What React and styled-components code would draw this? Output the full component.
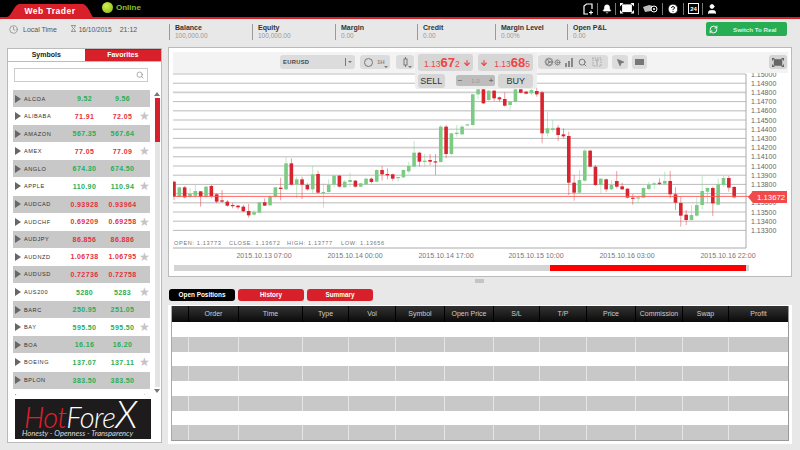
import React from 'react';
import styled, { createGlobalStyle } from 'styled-components';
import { RefreshCw, Cog, Search, Bell, HelpCircle, User, Hourglass, Clock, MousePointer2, ArrowDown as DownIcon } from 'lucide-react';

const GlobalStyle = createGlobalStyle`
  html, body { margin: 0; padding: 0; background: #e8e8e8; overflow: hidden; }
  body { font-family: "Liberation Sans", Arial, sans-serif; }
  * { box-sizing: border-box; }
`;

const Page = styled.div`
  width: 800px;
  height: 450px;
  overflow: hidden;
  background: #e8e8e8;
  display: flex;
  flex-direction: column;
`;

/* ---------- top black bar ---------- */
const TopBar = styled.div`
  height: 19px;
  flex: none;
  background: #000;
  border-bottom: 2px solid #d61f26;
  display: flex;
  align-items: flex-end;
  padding: 0 80px 0 7px;
`;
const BrandTab = styled.div`
  width: 86px;
  height: 13px;
  background: #d8202a;
  color: #fff;
  font-size: 8.5px;
  font-weight: bold;
  letter-spacing: 0.5px;
  line-height: 14px;
  text-align: center;
  clip-path: path('M0 13 C5 12 6 2 12 0 L76 0 C82 2 84 12 86 13 Z');
`;
const OnlineWrap = styled.div`
  display: flex;
  align-items: center;
  gap: 3px;
  margin: 0 0 3px 9px;
  height: 14px;
  color: #8cc320;
  font-size: 8px;
  font-weight: bold;
`;
const OnlineDot = styled.span`
  width: 11px;
  height: 11px;
  border-radius: 50%;
  background: radial-gradient(circle at 40% 35%, #d6f04a, #7fb512);
`;
const TopIcons = styled.div`
  margin-left: auto;
  height: 17px;
  display: flex;
  align-items: center;
  color: #fff;
`;
const TopIcon = styled.span`
  width: ${(p) => p.$w || 20}px;
  height: 12px;
  display: flex;
  align-items: center;
  justify-content: center;
  border-left: ${(p) => (p.$first ? 'none' : '1px solid #777')};
`;

/* ---------- info strip ---------- */
const InfoBar = styled.div`
  height: 28px;
  flex: none;
  display: flex;
  align-items: center;
  padding: 0 13px 3px 9px;
  color: #555;
`;
const LocalTime = styled.div`
  width: 160px;
  margin-bottom: 5px;
  display: flex;
  align-items: center;
  font-size: 6.6px;
  color: #444;
`;
const TimeValue = styled.span`
  margin-left: ${(p) => p.$gap}px;
  font-size: ${(p) => p.$size || 7}px;
  color: #555;
`;
const Stat = styled.div`
  width: ${(p) => p.$w}px;
  height: 16px;
  padding-left: 5px;
  border-left: 1px solid #999;
`;
const StatLabel = styled.div`
  font-size: 7px;
  font-weight: bold;
  color: #333;
  line-height: 7px;
`;
const StatValue = styled.div`
  font-size: 6.5px;
  color: #999;
  line-height: 10px;
`;
const RealButton = styled.div`
  margin: 0 0 5px auto;
  width: 81px;
  height: 14px;
  background: #27ae55;
  border-radius: 2px;
  color: #d8f2e0;
  font-size: 6.2px;
  font-weight: bold;
  display: flex;
  align-items: center;
  padding-left: 3px;
  gap: 15px;
`;

/* ---------- main layout ---------- */
const Main = styled.div`
  flex: 1;
  min-height: 0;
  display: flex;
  gap: 6px;
  padding: 0 8px 0 7px;
`;
const LeftPanel = styled.div`
  width: 155px;
  height: 395px;
  margin-top: 1px;
  flex: none;
  background: #fff;
  border: 1px solid #bbb;
  display: flex;
  flex-direction: column;
`;
const PanelTabs = styled.div`
  height: 13px;
  flex: none;
  display: flex;
  border-bottom: 1px solid #bbb;
`;
const PanelTab = styled.div`
  flex: 1;
  text-align: center;
  font-size: 7px;
  font-weight: bold;
  line-height: 12px;
  color: ${(p) => (p.$active ? '#fff' : '#222')};
  background: ${(p) => (p.$active ? '#d8202a' : '#fff')};
  box-shadow: ${(p) => (p.$active ? 'inset 0 1px 0 #7a2a4a' : 'none')};
`;
const SearchBox = styled.div`
  height: 14px;
  flex: none;
  margin: 6px 13px 8px 6px;
  border: 1px solid #ccc;
  display: flex;
  align-items: center;
  justify-content: flex-end;
  padding-right: 3px;
  color: #888;
`;
const ListArea = styled.div`
  height: 305px;
  flex: none;
  display: flex;
  padding-left: 5px;
  overflow: hidden;
`;
const SymbolList = styled.div`
  width: 137px;
  flex: none;
  display: flex;
  flex-direction: column;
  gap: 0.6px;
`;
const SymbolRow = styled.div`
  height: 17px;
  flex: none;
  display: grid;
  grid-template-columns: 11px 39px 43px 33px 11px;
  align-items: center;
  background: ${(p) => (p.$alt ? '#c8c8c8' : '#fff')};
`;
const RowArrow = styled.span`
  width: 0;
  height: 0;
  margin-left: 2px;
  border-left: 6px solid #666;
  border-top: 4px solid transparent;
  border-bottom: 4px solid transparent;
`;
const SymbolName = styled.span`
  font-size: 5.6px;
  letter-spacing: 0.55px;
  color: #333;
  white-space: nowrap;
`;
const Quote = styled.span`
  font-size: 7px;
  font-weight: bold;
  letter-spacing: 0.4px;
  text-align: center;
  color: ${(p) => (p.$up ? '#27ae55' : '#e5303a')};
`;
const Star = styled.span`
  color: #c4c4c4;
  font-size: 12px;
  line-height: 12px;
  text-align: center;
`;
const ScrollCol = styled.div`
  width: 9px;
  margin-left: 3px;
  height: 305px;
  display: flex;
  flex-direction: column;
  align-items: center;
`;
const ArrowUp = styled.span`
  margin-top: 2px;
  border-bottom: 4px solid #777;
  border-left: 3px solid transparent;
  border-right: 3px solid transparent;
`;
const ArrowDown = styled.span`
  margin-top: 2px;
  border-top: 4px solid #777;
  border-left: 3px solid transparent;
  border-right: 3px solid transparent;
`;
const ScrollTrack = styled.div`
  width: 5px;
  height: 289px;
  margin-top: 2px;
  background: #e4e4e4;
`;
const ScrollThumb = styled.div`
  width: 100%;
  height: 44px;
  background: #d8202a;
`;
const LogoBox = styled.div`
  width: 136px;
  height: 40px;
  margin: 4px 0 0 7px;
  flex: none;
  background: #1d1b1c;
  overflow: hidden;
  padding: 0 0 0 9px;
`;
const LogoWord = styled.div`
  height: 30px;
  font-family: Lato, "Liberation Sans", sans-serif;
  font-style: italic;
  font-weight: 300;
  font-size: 29px;
  line-height: 29px;
  letter-spacing: -0.6px;
  color: #fff;
  white-space: nowrap;
`;
const LogoHot = styled.span`
  color: #e21f2c;
`;
const LogoBigX = styled.span`
  font-size: 38px;
  line-height: 29px;
`;
const LogoTag = styled.div`
  font-family: Lato, "Liberation Sans", sans-serif;
  font-style: italic;
  font-size: 7.6px;
  line-height: 9px;
  color: #ddd;
  white-space: nowrap;
  margin-left: -2px;
`;
const RightCol = styled.div`
  width: 624px;
  flex: none;
  display: flex;
  flex-direction: column;
`;

/* ---------- chart panel ---------- */
const ChartPanel = styled.div`
  height: 230px;
  flex: none;
  background: #fff;
  border: 1px solid #bbb;
  padding: 4px 3px 0 4px;
`;
const ChartToolbar = styled.div`
  height: 21px;
  background: #f3f3f3;
  display: flex;
  align-items: flex-start;
  padding: 3px 1px 0 107px;
  color: #777;
`;
const Tool = styled.div`
  position: relative;
  height: 14px;
  width: ${(p) => p.$w}px;
  margin-left: ${(p) => p.$ml || '0'};
  padding-left: ${(p) => p.$pl || 0}px;
  background: ${(p) => p.$bg || '#dcdcdc'};
  border-radius: 3px;
  display: flex;
  align-items: center;
  justify-content: ${(p) => p.$justify || 'center'};
  gap: ${(p) => p.$gap || 0}px;
  flex: none;
`;
const PairName = styled.span`
  font-size: 5.8px;
  font-weight: bold;
  letter-spacing: 0.3px;
  color: #444;
  margin-left: 3px;
`;
const SelectEnd = styled.span`
  margin-left: auto;
  display: flex;
  align-items: center;
  gap: 2px;
  margin-right: 3px;
`;
const SelectBar = styled.i`
  width: 1px;
  height: 8px;
  background: #777;
`;
const TinyCaret = styled.i`
  border-top: 2.5px solid #777;
  border-left: 2px solid transparent;
  border-right: 2px solid transparent;
`;
const CornerCaret = styled(TinyCaret)`
  position: absolute;
  right: 2px;
  bottom: 1px;
`;
const Ring = styled.i`
  width: 9px;
  height: 9px;
  border-radius: 50%;
  border: 1px solid #777;
`;
const ToolText = styled.span`
  font-size: 6px;
  font-weight: bold;
  color: #888;
`;
const Gears = styled.span`
  display: flex;
  align-items: center;
  gap: 0;
`;
const TradeBox = styled.div`
  position: relative;
  z-index: 2;
  width: 122px;
  height: 36px;
  flex: none;
  margin: -2px 0 0 1px;
  background: #eee;
  border-radius: 3px;
  display: grid;
  grid-template-columns: 55px 55px;
  grid-template-rows: 17px 15px;
  column-gap: 5px;
  row-gap: 2px;
  padding: 1px 0 0 3px;
`;
const PriceCell = styled.div`
  background: #d6d6d6;
  border-radius: 3px;
  color: #ee4444;
  display: flex;
  align-items: center;
  justify-content: space-between;
  padding: ${(p) => (p.$buy ? '0 3px 0 2px' : '0 2px 0 6px')};
  font-size: 8.5px;
  white-space: nowrap;
`;
const PriceBig = styled.span`
  font-size: 13px;
  font-weight: bold;
`;
const SellBuyRow = styled.div`
  grid-column: 1 / 3;
  display: flex;
  align-items: center;
`;
const SideButton = styled.div`
  height: 14px;
  width: ${(p) => p.$w}px;
  background: #d6d6d6;
  border-radius: 3px;
  text-align: center;
  font-size: 9px;
  line-height: 14px;
  color: #333;
`;
const LotBox = styled.div`
  width: 40px;
  height: 11px;
  margin: 0 3px 0 11px;
  background: #bdbdbd;
  border-radius: 2px;
  display: flex;
  justify-content: space-between;
  align-items: center;
  padding: 0 2px;
  font-size: 6px;
  color: #999;
`;
const LotSign = styled.span`
  font-size: 8px;
  font-weight: bold;
  color: #777;
`;
const ChartSvg = styled.svg`
  display: block;
  width: 615px;
  height: 190px;
`;
const TimeScroll = styled.div`
  width: 575px;
  height: 6px;
  margin: 2px 0 0 1px;
  background: #d4d4d4;
  display: flex;
  justify-content: flex-end;
  padding-right: 3px;
`;
const TimeThumb = styled.div`
  width: 196px;
  height: 100%;
  background: #f00;
`;
const Splitter = styled.div`
  width: 9px;
  height: 4px;
  margin: 2px 0 0 307px;
  flex: none;
  background: #c4c4c4;
`;

/* ---------- orders ---------- */
const OrderTabs = styled.div`
  display: flex;
  gap: 3px;
  height: 12px;
  margin: 6px 0 4px 1px;
  flex: none;
`;
const OrderTab = styled.div`
  width: 66px;
  border-radius: 3px;
  background: ${(p) => (p.$active ? '#000' : '#d8202a')};
  color: #fff;
  text-align: center;
  font-size: 6.4px;
  font-weight: bold;
  line-height: 12px;
`;
const TableWrap = styled.div`
  width: 624px;
  height: 139px;
  flex: none;
  background: #fff;
  padding: 1px 3px 3px 3px;
`;
const COLUMNS = '17px 50px 64px 46px 47px 49px 49px 46px 47px 49px 47px 46px 60px';
const TableInner = styled.div`
  border-left: 1px solid #aaa;
  border-right: 1px solid #999;
  border-bottom: 1px solid #999;
  height: 135px;
  overflow: hidden;
`;
const HeadRow = styled.div`
  display: grid;
  grid-template-columns: ${COLUMNS};
  height: 16px;
  background: linear-gradient(#333, #0a0a0a);
`;
const HeadCell = styled.div`
  font-size: 7px;
  line-height: 16px;
  text-align: center;
  color: #ccc;
  border-right: 1px solid #000;
  white-space: nowrap;
`;
const BodyRow = styled.div`
  display: grid;
  grid-template-columns: ${COLUMNS};
  height: 14.75px;
  background: ${(p) => (p.$alt ? '#c8c8c8' : '#fff')};
`;
const BodyCell = styled.div`
  border-right: 1px solid ${(p) => (p.$alt ? '#e6e6e6' : '#fff')};
`;

const symbols = [
  ['ALCOA', '9.52', '9.56', 1], ['ALIBABA', '71.91', '72.05', 0], ['AMAZON', '567.35', '567.64', 1],
  ['AMEX', '77.05', '77.09', 0], ['ANGLO', '674.30', '674.50', 1], ['APPLE', '110.90', '110.94', 1],
  ['AUDCAD', '0.93928', '0.93964', 0], ['AUDCHF', '0.69209', '0.69258', 0], ['AUDJPY', '86.856', '86.886', 0],
  ['AUDNZD', '1.06738', '1.06795', 0], ['AUDUSD', '0.72736', '0.72758', 0], ['AUS200', '5280', '5283', 1],
  ['BARC', '250.95', '251.05', 1], ['BAY', '595.50', '595.50', 1], ['BOA', '16.16', '16.20', 1],
  ['BOEING', '137.07', '137.11', 1], ['BPLON', '383.50', '383.50', 1], ['', '0.00000', '0.00000', 0],
];

const columns = ['', 'Order', 'Time', 'Type', 'Vol', 'Symbol', 'Open Price', 'S/L', 'T/P', 'Price', 'Commission', 'Swap', 'Profit'];
const stats = [
  ['Balance', '100,000.00', 83], ['Equity', '100,000.00', 83], ['Margin', '0.00', 82],
  ['Credit', '0.00', 78], ['Margin Level', '0.00%', 72], ['Open P&L', '0.00', 70],
];

// candles: colour, body top, body bottom, wick top, wick bottom (offsets at 3x from y=130)
const candles = [
  ['r',155,200,152,210],['g',172,200,170,202],['r',172,202,168,205],['g',192,200,175,205],['g',183,197,165,205],
  ['r',184,200,183,230],['g',170,200,168,205],['r',168,198,165,205],['r',193,215,190,220],['r',211,215,180,218],
  ['r',215,227,210,230],['r',225,228,218,235],['r',227,232,225,238],['r',230,244,225,246],['r',243,256,222,263],
  ['g',246,254,240,256],['g',217,248,215,250],['r',217,227,205,228],['g',200,226,195,228],['g',172,199,170,205],
  ['r',173,177,143,211],['g',100,178,82,180],['r',100,164,85,166],['g',148,163,140,205],['r',148,164,140,207],
  ['r',165,178,160,182],['g',133,178,108,190],['r',132,188,122,190],['g',186,188,160,233],['g',165,186,148,188],
  ['g',137,164,135,172],['r',137,170,135,172],['g',155,172,150,172],['g',150,156,128,170],['r',152,170,150,172],
  ['g',160,170,158,172],['g',146,163,143,165],['r',146,156,143,160],['g',120,155,118,157],['r',120,133,108,152],
  ['r',132,136,115,148],['r',133,146,131,152],['g',141,143,140,155],['g',120,142,118,144],['g',108,124,95,130],
  ['g',68,110,33,112],['r',68,95,65,110],['g',92,96,72,110],['r',90,95,72,105],['r',94,96,72,135],
  ['g',-10,96,-15,98],['r',-10,72,-15,85],['g',10,72,8,75],['g',8,12,-15,20],['g',-10,13,-15,15],
  ['g',-17,-15,-18,-14],['g',-107,-15,-108,-14],['g',-122,-107,-125,-93],['r',-122,-80,-125,-78],['g',-118,-90,-120,-87],
  ['r',-118,-95,-120,-87],['r',-98,-92,-100,-85],['r',-93,-73,-113,-70],['g',-85,-75,-87,-60],['g',-122,-85,-125,-83],
  ['r',-122,-112,-125,-110],['r',-115,-109,-118,-107],['g',-120,-110,-125,-105],['r',-117,-107,-127,-100],['r',-113,10,-118,40],
  ['g',-5,10,-55,20],['g',-5,0,-30,7],['r',-7,15,-15,33],['r',13,19,-5,25],['r',18,158,5,195],
  ['r',158,188,135,212],['g',150,188,120,190],['g',62,152,57,155],['r',62,110,60,112],['r',110,165,105,168],
  ['g',146,165,144,190],['r',148,178,146,185],['g',165,178,150,180],['r',153,170,123,175],['r',169,178,158,180],
  ['r',176,203,175,205],['r',203,206,192,224],['g',202,205,198,220],['g',174,203,172,205],['g',164,177,155,180],
  ['g',160,164,155,178],['r',158,161,145,165],['g',153,161,125,165],['r',153,193,123,205],['r',193,218,172,240],
  ['r',219,257,200,290],['r',254,270,240,285],['g',255,270,225,272],['g',225,257,200,260],['g',183,225,138,238],
  ['g',174,185,172,220],['r',174,220,170,258],['g',163,224,145,225],['g',144,165,138,170],['r',144,173,138,185],
  ['r',171,202,168,205],
];
const toY = (z) => 130 + z / 3;
const prices = Array.from({ length: 18 }, (_, i) => (1.15 - i * 0.001).toFixed(5));
const softLines = [2, 4, 8, 14];
const timeLabels = [
  ['2015.10.13 07:00', 264], ['2015.10.14 00:00', 355], ['2015.10.14 17:00', 446],
  ['2015.10.15 10:00', 536], ['2015.10.16 03:00', 627], ['2015.10.16 22:00', 728],
];
const ohlc = [['OPEN: 1.13773', 174], ['CLOSE: 1.13672', 229], ['HIGH: 1.13777', 287], ['LOW: 1.13656', 341]];

const Chart = () => (
  <ChartSvg viewBox="173 73 615 190">
    {prices.map((p, i) => {
      const y = 74 + i * 9.2;
      const soft = softLines.includes(i);
      return (
        <g key={p}>
          <line x1="173" x2="746" y1={y} y2={y} stroke={soft ? '#cfcfcf' : '#aaa'} strokeWidth={soft ? 1.6 : 0.8} />
          <text x="751" y={y + 2.5} fontSize="7" fill="#666">{p}</text>
        </g>
      );
    })}
    <line x1="746" x2="746" y1="74" y2="248" stroke="#aaa" />
    <line x1="173" x2="746" y1="248" y2="248" stroke="#aaa" />
    {candles.map(([c, bt, bb, wt, wb], i) => {
      const x = 174 + i * 5.335;
      const col = c === 'g' ? '#7ccb85' : '#d9232e';
      return (
        <g key={i}>
          <rect x={x - 0.4} y={toY(wt)} width="0.8" height={(wb - wt) / 3} fill={col} opacity="0.55" />
          <rect x={x - 1.8} y={toY(bt)} width="3.6" height={Math.max((bb - bt) / 3, 1.2)} fill={col} />
        </g>
      );
    })}
    <line x1="173" x2="750" y1="196.4" y2="196.4" stroke="#f55" strokeWidth="0.9" />
    <path d="M748 197 L753 191 H787 V203 H753 Z" fill="#f24a4a" />
    <text x="757" y="200" fontSize="7.8" fill="#fff">1.13672</text>
    {ohlc.map(([t, x]) => (
      <text key={t} x={x} y="245" fontSize="5.6" letterSpacing="0.65" fill="#777">{t}</text>
    ))}
    {timeLabels.map(([t, x]) => (
      <text key={t} x={x} y="258" fontSize="7.1" textAnchor="middle" fill="#777">{t}</text>
    ))}
  </ChartSvg>
);

const ExpandIcon = ({ size = 15, color = '#fff' }) => (
  <svg width={size} height={size * 0.75} viewBox="0 0 20 15">
    <rect x="3" y="2" width="14" height="11" fill={color} />
    <path d="M0 0 h5 l-5 5z M20 0 h-5 l5 5z M0 15 h5 l-5 -5z M20 15 h-5 l5 -5z" fill={color} />
  </svg>
);

const App = () => (
  <Page>
    <GlobalStyle />
    <TopBar>
      <BrandTab>Web Trader</BrandTab>
      <OnlineWrap><OnlineDot />Online</OnlineWrap>
      <TopIcons>
        <TopIcon $first $w={18}>
          <svg width="10" height="12" viewBox="0 0 10 12" fill="none" stroke="#fff" strokeWidth="1.2">
            <path d="M5 11 H1 V3 L3.5 1 H9 V6 M6 9.5 H10 M8 7.5 V11.5" />
          </svg>
        </TopIcon>
        <TopIcon $w={18}><Bell size={10} fill="#fff" strokeWidth={1.5} /></TopIcon>
        <TopIcon $w={23}><ExpandIcon size={14} /></TopIcon>
        <TopIcon $w={24}>
          <svg width="15" height="9" viewBox="0 0 15 9">
            <path d="M0 3 L6 1 L10 2 L8 7 L2 8 Z" fill="#bbb" />
            <circle cx="11" cy="5" r="3" fill="#000" stroke="#fff" />
            <circle cx="11" cy="5" r="1" fill="#fff" />
          </svg>
        </TopIcon>
        <TopIcon $w={21}><HelpCircle size={12} fill="#fff" color="#000" strokeWidth={2} /></TopIcon>
        <TopIcon $w={19}>
          <svg width="11" height="11" viewBox="0 0 11 11">
            <rect x="0.5" y="0.5" width="10" height="10" fill="#000" stroke="#fff" />
            <text x="5.5" y="7.5" fontSize="6" fontWeight="bold" textAnchor="middle" fill="#fff">24</text>
          </svg>
        </TopIcon>
        <TopIcon $w={18}><User size={12} fill="#fff" strokeWidth={1.5} /></TopIcon>
      </TopIcons>
    </TopBar>

    <InfoBar>
      <LocalTime>
        <Clock size={9} color="#888" />
        <TimeValue $gap={5}>Local Time</TimeValue>
        <TimeValue $gap={13}><Hourglass size={7} color="#666" /></TimeValue>
        <TimeValue $gap={0} $size={6.6}>&nbsp;16/10/2015</TimeValue>
        <TimeValue $gap={8}>21:12</TimeValue>
      </LocalTime>
      {stats.map(([label, value, w]) => (
        <Stat key={label} $w={w}>
          <StatLabel>{label}</StatLabel>
          <StatValue>{value}</StatValue>
        </Stat>
      ))}
      <RealButton><RefreshCw size={9} color="#fff" strokeWidth={2.5} />Switch To Real</RealButton>
    </InfoBar>

    <Main>
      <LeftPanel>
        <PanelTabs>
          <PanelTab>Symbols</PanelTab>
          <PanelTab $active>Favorites</PanelTab>
        </PanelTabs>
        <SearchBox><Search size={8} /></SearchBox>
        <ListArea>
          <SymbolList>
            {symbols.map(([name, bid, ask, up], i) => (
              <SymbolRow key={i} $alt={i % 2 === 0}>
                <RowArrow />
                <SymbolName>{name}</SymbolName>
                <Quote $up={up}>{bid}</Quote>
                <Quote $up={up}>{ask}</Quote>
                {i % 2 === 1 ? <Star>★</Star> : <span />}
              </SymbolRow>
            ))}
          </SymbolList>
          <ScrollCol>
            <ArrowUp />
            <ScrollTrack><ScrollThumb /></ScrollTrack>
            <ArrowDown />
          </ScrollCol>
        </ListArea>
        <LogoBox>
          <LogoWord><LogoHot>Hot</LogoHot>Fore<LogoBigX>X</LogoBigX></LogoWord>
          <LogoTag>Honesty - Openness - Transparency</LogoTag>
        </LogoBox>
      </LeftPanel>

      <RightCol>
        <ChartPanel>
          <ChartToolbar>
            <Tool $w={75} $justify="flex-start">
              <PairName>EURUSD</PairName>
              <SelectEnd><SelectBar /><TinyCaret /></SelectEnd>
            </Tool>
            <Tool $w={30} $ml="5px" $pl={4} $gap={4} $justify="flex-start">
              <Ring /><ToolText>1H</ToolText><CornerCaret />
            </Tool>
            <Tool $w={18} $ml="6px">
              <svg width="5" height="10" viewBox="0 0 5 10" fill="none" stroke="#777"><rect x="1" y="2" width="3" height="6" /><path d="M2.5 0 V2 M2.5 8 V10" /></svg>
              <CornerCaret />
            </Tool>
            <TradeBox>
              <PriceCell>
                <span>1.13<PriceBig>67</PriceBig>2</span>
                <DownIcon size={8} strokeWidth={3.5} />
              </PriceCell>
              <PriceCell $buy>
                <DownIcon size={8} strokeWidth={3.5} />
                <span>1.13<PriceBig>68</PriceBig>5</span>
              </PriceCell>
              <SellBuyRow>
                <SideButton $w={27}>SELL</SideButton>
                <LotBox><LotSign>−</LotSign>1.0<LotSign>+</LotSign></LotBox>
                <SideButton $w={35}>BUY</SideButton>
              </SellBuyRow>
            </TradeBox>
            <Tool $w={70} $ml="1px" $gap={4}>
              <Gears><Cog size={10} /><Cog size={7} /></Gears>
              <svg width="9" height="9" viewBox="0 0 9 9" fill="#888"><rect x="0" y="5" width="2" height="4" /><rect x="3" y="3" width="2" height="6" /><rect x="6" y="0" width="2" height="9" /></svg>
              <Search size={9} strokeWidth={2.5} />
              <svg width="11" height="10" viewBox="0 0 11 10" fill="none" stroke="#999" strokeWidth="0.8"><path d="M1 1 H10 V9 H2 V1" strokeDasharray="1.5 1" /><path d="M4 3 H8 M6 3 V8" /></svg>
            </Tool>
            <Tool $w={16} $ml="4px"><MousePointer2 size={9} fill="#777" /></Tool>
            <Tool $w={15} $ml="4px"><svg width="9" height="6"><rect width="9" height="6" fill="#777" /></svg></Tool>
            <Tool $w={18} $ml="auto" $bg="#d4d4d4"><ExpandIcon size={12} color="#666" /></Tool>
          </ChartToolbar>
          <Chart />
          <TimeScroll><TimeThumb /></TimeScroll>
        </ChartPanel>
        <Splitter />
        <OrderTabs>
          <OrderTab $active>Open Positions</OrderTab>
          <OrderTab>History</OrderTab>
          <OrderTab>Summary</OrderTab>
        </OrderTabs>
        <TableWrap>
          <TableInner>
            <HeadRow>
              {columns.map((c, i) => <HeadCell key={i}>{c}</HeadCell>)}
            </HeadRow>
            {Array.from({ length: 8 }, (_, r) => (
              <BodyRow key={r} $alt={r % 2 === 1}>
                {columns.map((_c, i) => <BodyCell key={i} $alt={r % 2 === 1} />)}
              </BodyRow>
            ))}
          </TableInner>
        </TableWrap>
      </RightCol>
    </Main>
  </Page>
);

export default App;
